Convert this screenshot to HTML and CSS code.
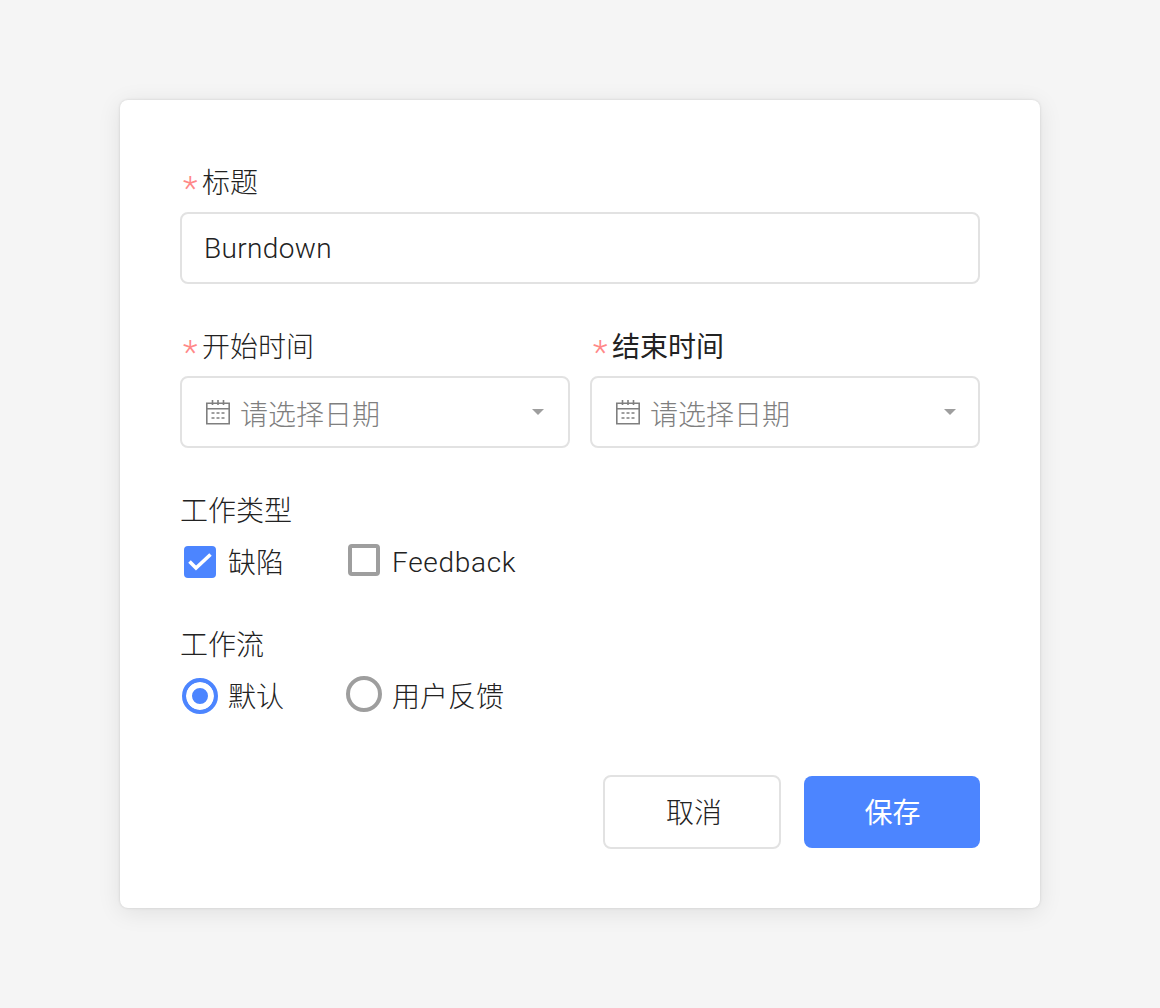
FILE: index.html
```html
<!DOCTYPE html>
<html lang="zh-CN">
<head>
<meta charset="utf-8">
<title>表单</title>
<link rel="stylesheet" href="styles.css">
</head>
<body>
<form class="card">
  <div class="group">
    <div class="label"><span class="req">*</span>标题</div>
    <div class="input"><span class="value">Burndown</span></div>
  </div>
  <div class="date-row">
    <div class="group">
      <div class="label"><span class="req">*</span>开始时间</div>
      <div class="input date">
        <svg class="cal" viewBox="0 0 24 26" width="24" height="26"><path d="M.8 4.200h22.400v20.600H.8z M.8 9.800h22.400 M6.500 1v5 M12 1v5 M17.500 1v5" fill="none" stroke="#7f7f7f" stroke-width="1.600"/><path d="M5.500 14h3 M10.500 14h3 M15.500 14h3 M5.500 19h3 M10.500 19h3 M15.500 19h3" fill="none" stroke="#7f7f7f" stroke-width="1.400"/></svg>
        <span class="placeholder">请选择日期</span>
        <span class="caret"></span>
      </div>
    </div>
    <div class="group">
      <div class="label label-strong"><span class="req">*</span>结束时间</div>
      <div class="input date date-end">
        <svg class="cal" viewBox="0 0 24 26" width="24" height="26"><path d="M.8 4.200h22.400v20.600H.8z M.8 9.800h22.400 M6.500 1v5 M12 1v5 M17.500 1v5" fill="none" stroke="#7f7f7f" stroke-width="1.600"/><path d="M5.500 14h3 M10.500 14h3 M15.500 14h3 M5.500 19h3 M10.500 19h3 M15.500 19h3" fill="none" stroke="#7f7f7f" stroke-width="1.400"/></svg>
        <span class="placeholder">请选择日期</span>
        <span class="caret"></span>
      </div>
    </div>
  </div>
  <div class="group choice-group">
    <div class="label">工作类型</div>
    <div class="options">
      <div class="option">
        <span class="slot"><span class="check on"><svg viewBox="0 0 32 32" width="32" height="32"><path d="M5.500 15.500l6.500 6.500L26.500 8.500" fill="none" stroke="#fff" stroke-width="3.600"/></svg></span></span>
        <span class="txt">缺陷</span>
      </div>
      <div class="option">
        <span class="slot"><span class="check off"></span></span>
        <span class="latin">Feedback</span>
      </div>
    </div>
  </div>
  <div class="group choice-group second">
    <div class="label">工作流</div>
    <div class="options">
      <div class="option">
        <span class="slot"><span class="radio on"></span></span>
        <span class="txt">默认</span>
      </div>
      <div class="option">
        <span class="slot"><span class="radio off"></span></span>
        <span class="txt">用户反馈</span>
      </div>
    </div>
  </div>
  <div class="actions">
    <button type="button" class="btn cancel">取消</button>
    <button type="button" class="btn save">保存</button>
  </div>
</form>
</body>
</html>
```
FILE: styles.css
```css
* { box-sizing: border-box; }
html, body { margin: 0; height: 100%; }
body {
  background: #f5f5f5;
  padding: 100px 120px;
  font-family: "Roboto", "Noto Sans CJK SC", sans-serif;
  font-weight: 300;
  font-size: 28px;
  color: #222;
}
.card {
  width: 920px;
  height: 808px;
  background: #fff;
  border-radius: 8px;
  padding: 64px 60px 60px;
  box-shadow: 0 0 3px rgba(0,0,0,.13), 0 4px 24px rgba(0,0,0,.09);
  display: flex;
  flex-direction: column;
}
.label {
  height: 36px;
  line-height: 34px;
  display: flex;
  font-family: "Noto Sans CJK SC", sans-serif;
  margin-bottom: 12px;
  margin-left: -1px;
}
.label-strong { font-weight: 400; margin-left: -1px; }
.req {
  width: 23px;
  color: #f88;
  padding-left: 4px;
  padding-top: 7px;
  font-size: 34px;
  font-family: "Roboto", sans-serif;
  font-weight: 300;
}
.input {
  height: 72px;
  border: 2px solid #e2e2e2;
  border-radius: 8px;
  display: flex;
  align-items: center;
  padding: 0 22px;
}
.value { letter-spacing: .35px; }
.date-row {
  display: grid;
  grid-template-columns: 390px 390px;
  gap: 20px;
  margin-top: 44px;
}
.date { padding: 0 24px 0 24px; }
.cal { flex: none; margin-right: 10px; }
.placeholder {
  flex: 1;
  color: #7f7f7f;
  padding-top: 2px;
  font-family: "Noto Sans CJK SC", sans-serif;
}
.caret {
  width: 0; height: 0;
  border-left: 6px solid transparent;
  border-right: 6px solid transparent;
  border-top: 6px solid #9e9e9e;
  margin-right: 0;
}
.date-end .caret { margin-right: -2px; }
.choice-group { margin-top: 44px; }
.choice-group.second { margin-top: 46px; }
.choice-group .label { margin-bottom: 16px; margin-left: 0; }
.options { display: flex; gap: 60px; height: 36px; }
.option {
  display: flex;
  align-items: center;
  gap: 8px;
  font-family: "Noto Sans CJK SC", sans-serif;
  line-height: 34px;
}
.txt { padding-bottom: 2px; }
.latin { font-family: "Roboto", sans-serif; letter-spacing: .7px; padding-top: 2px; }
.slot {
  width: 40px;
  display: flex;
  justify-content: center;
  align-items: center;
}
.check { width: 32px; height: 32px; border-radius: 4px; display: block; }
.check svg { display: block; }
.check.on { background: #4c85ff; }
.check.off { border: 4px solid #9e9e9e; margin-bottom: 4px; }
.radio { width: 36px; height: 36px; border-radius: 50%; display: block; }
.radio.on {
  border: 4px solid #4c85ff;
  background: #4c85ff;
  box-shadow: inset 0 0 0 6px #fff;
}
.radio.off { border: 4px solid #9e9e9e; margin-bottom: 4px; }
.actions {
  display: flex;
  justify-content: flex-end;
  align-items: center;
  gap: 23px;
  margin-top: 61px;
}
.btn {
  font: inherit;
  font-family: "Noto Sans CJK SC", sans-serif;
  border-radius: 8px;
  padding: 0 0 2px;
}
.cancel {
  width: 178px;
  height: 74px;
  background: #fff;
  border: 2px solid #e2e2e2;
  color: #222;
  padding-left: 4px;
}
.save {
  width: 176px;
  height: 72px;
  background: #4c85ff;
  border: 0;
  color: #fff;
  font-weight: 400;
  padding-left: 1px;
}
```
